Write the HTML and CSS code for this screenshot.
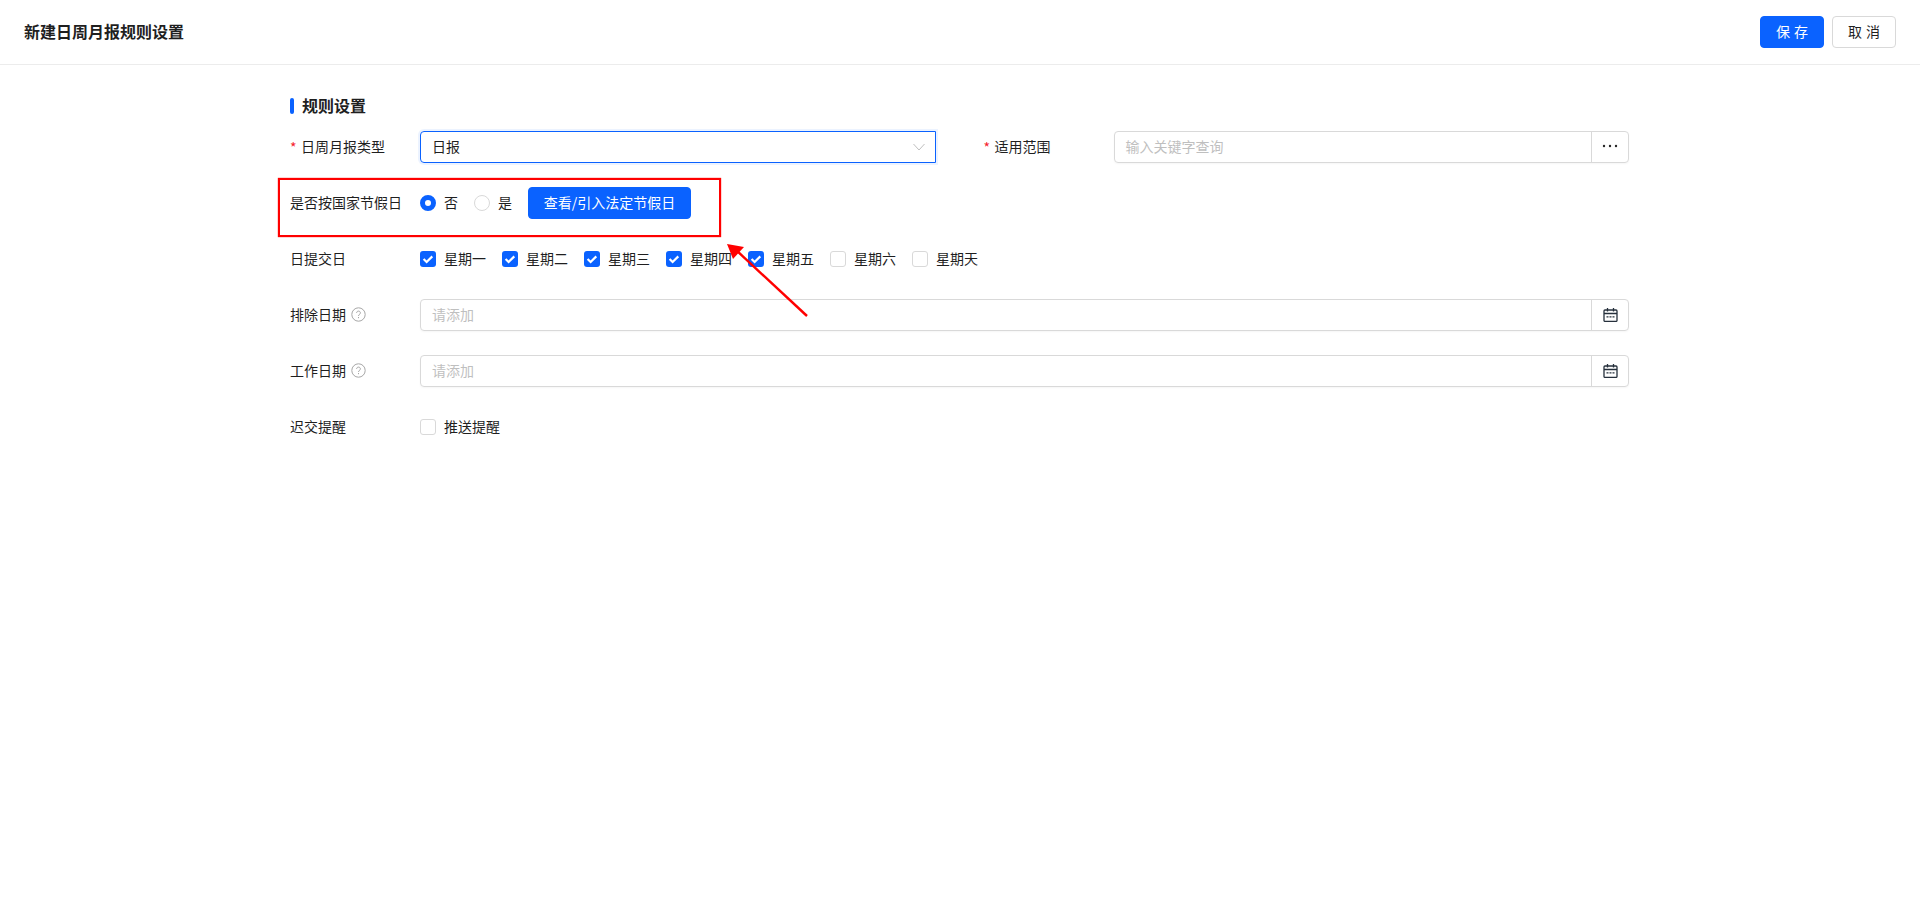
FILE: index.html
```html
<!DOCTYPE html>
<html lang="zh-CN">

<head>
  <meta charset="utf-8">
  <title>新建日周月报规则设置</title>
  <link rel="stylesheet" href="styles.css">
</head>

<body>
  <header class="topbar">
    <h1 class="page-title">新建日周月报规则设置</h1>
    <div class="topbar-actions">
      <button class="btn btn-primary btn-spaced"><span class="txt">保存</span></button>
      <button class="btn btn-spaced"><span class="txt">取消</span></button>
    </div>
  </header>

  <main class="content">
    <h2 class="section-title">规则设置</h2>

    <div class="form-row form-row-split">
      <div class="field">
        <label class="field-label required"><span class="txt">日周月报类型</span></label>
        <div class="select is-focused">
          <span class="txt">日报</span>
          <svg class="select-arrow" viewBox="0 0 12 8" fill="none" stroke="currentColor" stroke-width="1">
            <path d="M0.5 1l5.5 6 5.5-6" />
          </svg>
        </div>
      </div>
      <div class="field">
        <label class="field-label required"><span class="txt">适用范围</span></label>
        <div class="input-group">
          <span class="input-text placeholder"><span class="txt">输入关键字查询</span></span>
          <span class="input-addon">
            <svg class="icon-dots" viewBox="0 0 16 4" fill="currentColor">
              <circle cx="2" cy="2" r="1.2" />
              <circle cx="8" cy="2" r="1.2" />
              <circle cx="14" cy="2" r="1.2" />
            </svg>
          </span>
        </div>
      </div>
    </div>

    <div class="form-row">
      <div class="field">
        <label class="field-label"><span class="txt">是否按国家节假日</span></label>
        <div class="options options-radio">
          <span class="option"><span class="radio is-checked"></span><span class="txt">否</span></span>
          <span class="option"><span class="radio"></span><span class="txt">是</span></span>
          <button class="btn btn-primary btn-wide"><span class="txt">查看/引入法定节假日</span></button>
        </div>
      </div>
    </div>

    <div class="form-row">
      <div class="field">
        <label class="field-label"><span class="txt">日提交日</span></label>
        <div class="options">
          <span class="option">
            <span class="checkbox is-checked"><svg viewBox="0 0 16 16" fill="none" stroke="#fff" stroke-width="2.2"><path d="M3.6 8l3 3 5.700-5.600" /></svg></span><span class="txt">星期一</span>
          </span>
          <span class="option">
            <span class="checkbox is-checked"><svg viewBox="0 0 16 16" fill="none" stroke="#fff" stroke-width="2.2"><path d="M3.6 8l3 3 5.700-5.600" /></svg></span><span class="txt">星期二</span>
          </span>
          <span class="option">
            <span class="checkbox is-checked"><svg viewBox="0 0 16 16" fill="none" stroke="#fff" stroke-width="2.2"><path d="M3.6 8l3 3 5.700-5.600" /></svg></span><span class="txt">星期三</span>
          </span>
          <span class="option">
            <span class="checkbox is-checked"><svg viewBox="0 0 16 16" fill="none" stroke="#fff" stroke-width="2.2"><path d="M3.6 8l3 3 5.700-5.600" /></svg></span><span class="txt">星期四</span>
          </span>
          <span class="option">
            <span class="checkbox is-checked"><svg viewBox="0 0 16 16" fill="none" stroke="#fff" stroke-width="2.2"><path d="M3.6 8l3 3 5.700-5.600" /></svg></span><span class="txt">星期五</span>
          </span>
          <span class="option"><span class="checkbox"></span><span class="txt">星期六</span></span>
          <span class="option"><span class="checkbox"></span><span class="txt">星期天</span></span>
        </div>
      </div>
    </div>

    <div class="form-row">
      <div class="field">
        <label class="field-label"><span class="txt">排除日期</span>
          <svg class="icon-help" viewBox="0 0 15 15" fill="none" stroke="currentColor">
            <circle cx="7.500" cy="7.500" r="6.700" />
            <path d="M5.600 6c0-1.100.8-1.900 1.900-1.900s1.900.8 1.900 1.800c0 1.500-1.900 1.500-1.900 3.100" />
            <path d="M7.500 10v1.200" />
          </svg>
        </label>
        <div class="input-group">
          <span class="input-text placeholder"><span class="txt">请添加</span></span>
          <span class="input-addon">
            <svg class="icon-calendar" viewBox="0 0 15 14" fill="none" stroke="currentColor" stroke-width="1.300">
              <rect x="1" y="2" width="13" height="11.400" rx="1" />
              <path d="M1 5.500h13M4.500 0v3.500M10.500 0v3.500" />
              <path d="M3.500 8.800h2M6.500 8.800h2M9.500 8.800h2" />
            </svg>
          </span>
        </div>
      </div>
    </div>

    <div class="form-row">
      <div class="field">
        <label class="field-label"><span class="txt">工作日期</span>
          <svg class="icon-help" viewBox="0 0 15 15" fill="none" stroke="currentColor">
            <circle cx="7.500" cy="7.500" r="6.700" />
            <path d="M5.600 6c0-1.100.8-1.900 1.900-1.900s1.900.8 1.900 1.800c0 1.500-1.900 1.500-1.900 3.100" />
            <path d="M7.500 10v1.200" />
          </svg>
        </label>
        <div class="input-group">
          <span class="input-text placeholder"><span class="txt">请添加</span></span>
          <span class="input-addon">
            <svg class="icon-calendar" viewBox="0 0 15 14" fill="none" stroke="currentColor" stroke-width="1.300">
              <rect x="1" y="2" width="13" height="11.400" rx="1" />
              <path d="M1 5.500h13M4.500 0v3.500M10.500 0v3.500" />
              <path d="M3.500 8.800h2M6.500 8.800h2M9.500 8.800h2" />
            </svg>
          </span>
        </div>
      </div>
    </div>

    <div class="form-row">
      <div class="field">
        <label class="field-label"><span class="txt">迟交提醒</span></label>
        <div class="options">
          <span class="option"><span class="checkbox"></span><span class="txt">推送提醒</span></span>
        </div>
      </div>
    </div>
  </main>

  <!-- annotation drawn on top of the screenshot -->
  <div class="note-box"></div>
  <svg class="note-arrow" viewBox="0 0 100 90" fill="#ff0000" stroke="#ff0000">
    <path d="M87 76L16 10" stroke-width="2.400" fill="none" />
    <path d="M7 4L24 7 13 19z" stroke="none" />
  </svg>
</body>

</html>
```

FILE: styles.css
```css
:root {
  --primary: #0a62ff;
  --text: #1f1f1f;
  --border: #d9d9d9;
  --placeholder: #bfbfbf;
  --line: #ececec;
}

* {
  box-sizing: border-box;
  margin: 0;
  padding: 0;
}

body {
  position: relative;
  min-height: 919px;
  background: #fff;
  color: var(--text);
  font-family: "Noto Sans CJK SC", "Liberation Sans", sans-serif;
  font-size: 14px;
  line-height: 22px;
}

/* the CJK font sits low in its line box, lift text by 1px */
.txt {
  display: block;
  padding-bottom: 2px;
}

.topbar {
  display: flex;
  align-items: center;
  justify-content: space-between;
  height: 65px;
  padding: 0 24px;
  border-bottom: 1px solid var(--line);
}

.page-title {
  padding-bottom: 2px;
  font-size: 16px;
  font-weight: 700;
  line-height: 24px;
}

.topbar-actions {
  display: flex;
  gap: 8px;
}

.btn {
  height: 32px;
  padding: 0 16px;
  border: 1px solid var(--border);
  border-radius: 4px;
  background: #fff;
  color: var(--text);
  font: inherit;
}

.btn-primary {
  border-color: var(--primary);
  background: var(--primary);
  color: #fff;
}

.btn-spaced {
  width: 64px;
  padding: 0;
  letter-spacing: 4px;
  text-indent: 4px;
}

.btn-wide {
  width: 163px;
  padding: 0;
}

.content {
  width: 1340px;
  margin: 0 auto;
  padding: 29px 1px 0 0;
}

.section-title {
  position: relative;
  margin-bottom: 13px;
  padding: 0 0 2px 12px;
  font-size: 16px;
  font-weight: 700;
  line-height: 22px;
}

.section-title::before {
  content: "";
  position: absolute;
  left: 0;
  top: 4px;
  width: 4px;
  height: 16px;
  border-radius: 2px;
  background: var(--primary);
}

.form-row {
  margin-bottom: 24px;
}

.form-row-split {
  display: grid;
  grid-template-columns: 1fr 1fr;
  column-gap: 48px;
}

.field {
  display: flex;
  align-items: center;
  min-height: 32px;
}

.field-label {
  display: flex;
  align-items: center;
  flex: 0 0 130px;
  gap: 5px;
}

.required {
  gap: 4px;
}

.required::before {
  content: "*";
  width: 7px;
  color: #f5222d;
}

.select,
.input-group {
  display: flex;
  flex: 1;
  height: 32px;
  border: 1px solid var(--border);
  border-radius: 4px;
  box-shadow: 0 1px 2px rgba(0, 0, 0, 0.04);
}

.select {
  align-items: center;
  justify-content: space-between;
  padding: 0 10px 0 11px;
}

.select.is-focused {
  border-color: var(--primary);
  border-radius: 4px 0 0 4px;
  box-shadow: 0 0 0 2px rgba(10, 98, 255, 0.08);
}

.select-arrow {
  width: 12px;
  height: 8px;
  color: #bfbfbf;
}

.input-text {
  display: flex;
  align-items: center;
  flex: 1;
  padding: 0 11px;
}

.placeholder {
  color: var(--placeholder);
}

.input-addon {
  display: flex;
  align-items: center;
  justify-content: center;
  flex: 0 0 37px;
  border-left: 1px solid var(--border);
}

.icon-dots {
  width: 16px;
  height: 4px;
  margin-bottom: 2px;
  color: #262626;
}

.icon-calendar {
  width: 15px;
  height: 14px;
  margin-bottom: 1px;
  color: #26303c;
}

.icon-help {
  width: 15px;
  height: 15px;
  margin-bottom: 1px;
  color: #a6a6a6;
}

.options {
  display: flex;
  align-items: center;
  gap: 16px;
}

.option {
  display: flex;
  align-items: center;
  gap: 8px;
}

.radio,
.checkbox {
  display: block;
  flex: none;
  width: 16px;
  height: 16px;
  border: 1px solid var(--border);
  background: #fff;
}

.radio {
  border-radius: 50%;
}

.radio.is-checked {
  border: 5px solid var(--primary);
}

.checkbox {
  border-radius: 3px;
}

.checkbox.is-checked {
  border: none;
  background: var(--primary);
}

.checkbox svg {
  display: block;
}

.note-box {
  position: absolute;
  left: 278px;
  top: 178px;
  width: 443px;
  height: 59px;
  border: 2px solid #ff0000;
  box-shadow: 0 0 1px #ff0000;
}

.note-arrow {
  position: absolute;
  left: 720px;
  top: 240px;
  width: 100px;
  height: 90px;
}
```
